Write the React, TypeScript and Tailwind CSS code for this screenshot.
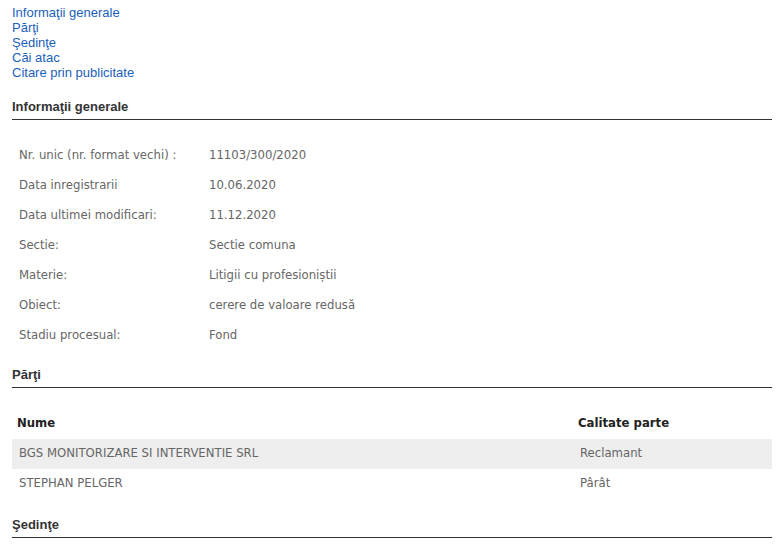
import React from 'react';

const links = ['Informaţii generale', 'Părţi', 'Şedinţe', 'Căi atac', 'Citare prin publicitate'];

const details: [string, string][] = [
  ['Nr. unic (nr. format vechi) :', '11103/300/2020'],
  ['Data inregistrarii', '10.06.2020'],
  ['Data ultimei modificari:', '11.12.2020'],
  ['Sectie:', 'Sectie comuna'],
  ['Materie:', 'Litigii cu profesioniștii'],
  ['Obiect:', 'cerere de valoare redusă'],
  ['Stadiu procesual:', 'Fond'],
];

const parti: [string, string][] = [
  ['BGS MONITORIZARE SI INTERVENTIE SRL', 'Reclamant'],
  ['STEPHAN PELGER', 'Pârât'],
];

const SectionTitle = ({ children }: { children: React.ReactNode }) => (
  <div className="border-b border-[#333] pb-[5px] text-[13px] leading-[15px] font-bold text-[#333] [font-family:'Liberation_Sans',Arial,sans-serif]">
    {children}
  </div>
);

export default function App() {
  return (
    <div className="w-[779px] h-[544px] overflow-hidden bg-white pl-[12px] pr-[7px] pt-[5px] [font-family:'Liberation_Sans',Arial,sans-serif]">
      <div className="flex flex-col">
        {links.map((l) => (
          <a key={l} href="#" className="text-[13px] leading-[15px] text-[#1b5fbd]">
            {l}
          </a>
        ))}
      </div>

      <div className="mt-[19px]">
        <SectionTitle>Informaţii generale</SectionTitle>
      </div>

      <table className="mt-[21px] w-full border-collapse text-[11.7px] text-[#666] [font-family:'DejaVu_Sans',Verdana,sans-serif]">
        <tbody>
          {details.map(([k, v]) => (
            <tr key={k} className="h-[30px]">
              <td className="w-[197px] pl-[7px] align-middle">{k}</td>
              <td className="align-middle">{v}</td>
            </tr>
          ))}
        </tbody>
      </table>

      <div className="mt-[16px]">
        <SectionTitle>Părţi</SectionTitle>
      </div>

      <table className="mt-[20px] w-full border-collapse text-[11.7px] [font-family:'DejaVu_Sans',Verdana,sans-serif]">
        <thead>
          <tr className="h-[31px]">
            <th className="w-[561px] pl-[5px] text-left font-bold text-[#222]">Nume</th>
            <th className="pl-[5px] text-left font-bold text-[#222]">Calitate parte</th>
          </tr>
        </thead>
        <tbody>
          {parti.map(([n, c], i) => (
            <tr key={n} className={i % 2 === 0 ? 'h-[30px] bg-[#eeeeee]' : 'h-[30px]'}>
              <td className="pl-[7px] text-[#666]">{n}</td>
              <td className="pl-[7px] text-[#666]">{c}</td>
            </tr>
          ))}
        </tbody>
      </table>

      <div className="mt-[18px]">
        <SectionTitle>Şedinţe</SectionTitle>
      </div>
    </div>
  );
}
